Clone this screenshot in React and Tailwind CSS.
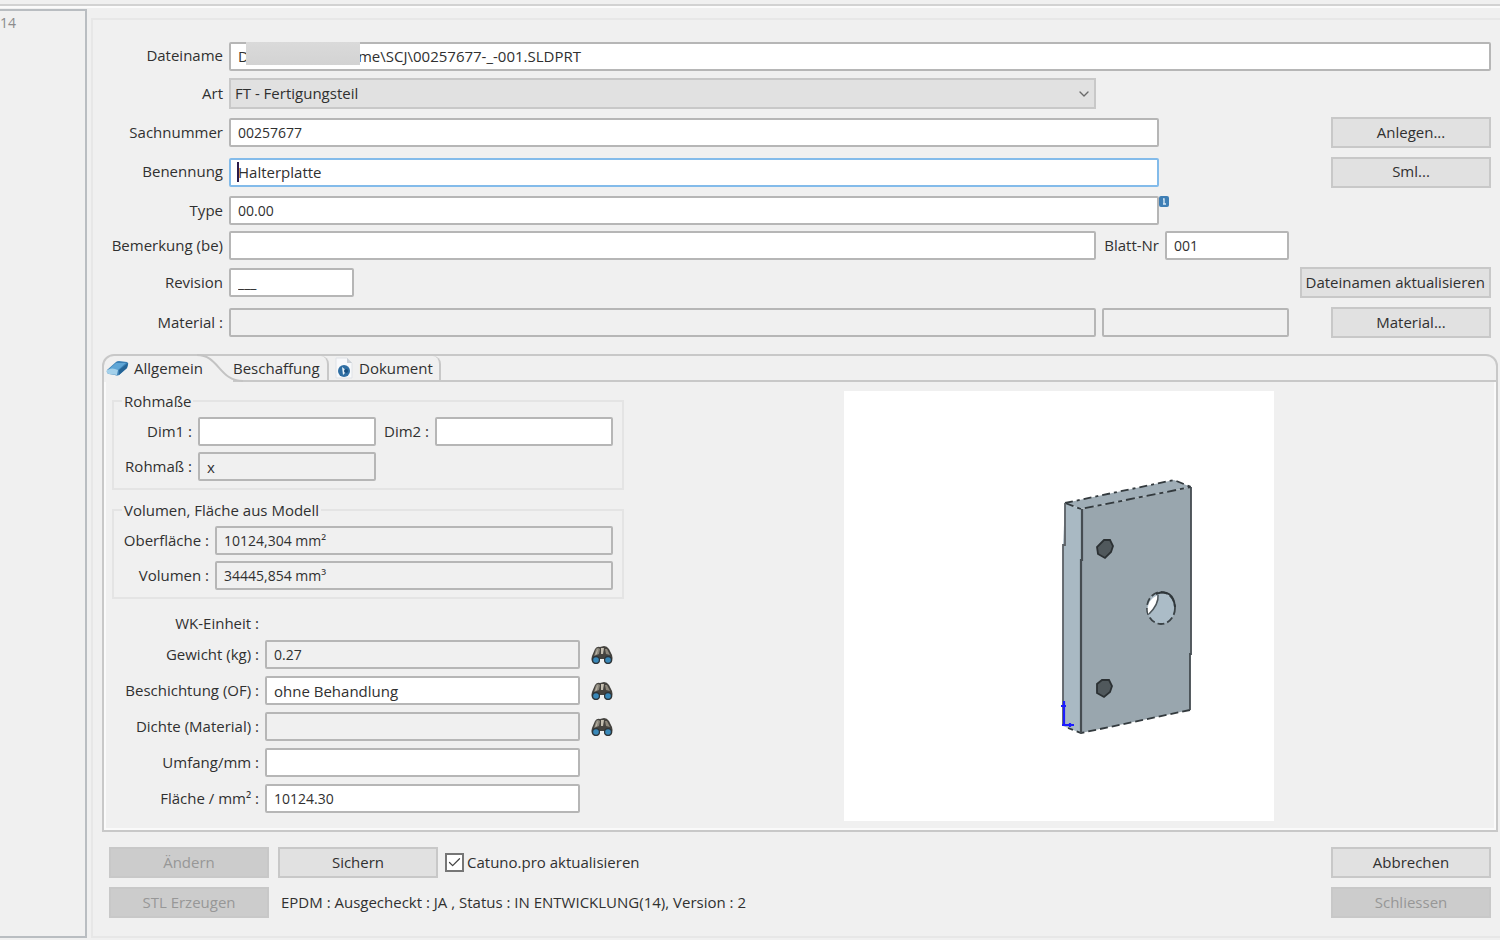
import React, { useState } from "react";
import { Check, ChevronDown } from "lucide-react";
import clsx from "clsx";

// "D" + blanks under the hidden part of the path
const FILE_NAME = "D" + "\u00a0".repeat(28) + "me\\SCJ\\00257677-_-001.SLDPRT";

const Field = ({ id, value = "", readOnly, focused, numeric, className }) => {
  const [text, setText] = useState(value);

  return (
    <input
      id={id}
      type="text"
      value={text}
      readOnly={readOnly}
      onChange={(e) => setText(e.target.value)}
      className={clsx(
        "h-[29px] min-w-0 rounded-xs border-2 px-[7px] outline-none",
        readOnly ? "bg-[#f0f0f0]" : "bg-white",
        focused ? "border-[#83bbea]" : "border-[#b6b6b6]",
        numeric ? "text-[14px]" : "text-[15px]",
        className
      )}
    />
  );
};

const Label = ({ htmlFor, children, className }) => (
  <label htmlFor={htmlFor} className={clsx("pb-0.5 text-right leading-5 whitespace-nowrap", className)}>
    {children}
  </label>
);

const Button = ({ children, disabled, className }) => (
  <button
    type="button"
    disabled={disabled}
    className={clsx(
      "h-[31px] border-2 pb-0.5 whitespace-nowrap leading-5",
      disabled ? "border-[#c8c8c8] bg-[#cccccc] text-[#979797]" : "border-[#c8c8c8] bg-[#e1e1e1]",
      className
    )}
  >
    {children}
  </button>
);

const PartIcon = () => (
  <svg width="24" height="20" viewBox="0 0 24 20" aria-hidden="true">
    <path d="M1 12 L10 4 Q11 3 13 3 L21 4 Q23 5 22 7 L21 10 L13 17 Q11 18 9 17 L3 16 Q0 15 1 12Z" fill="#3b80b5" />
    <path d="M3 11 L10 5 L20 5 L12 12Z" fill="#5fa6d6" />
    <path d="M1 12 Q6 9 12 12 L11 17 L3 16 Q0 15 1 12Z" fill="#a3d0ea" />
    <path d="M13 12 L22 5 L21 10 L13 17Z" fill="#256496" />
  </svg>
);

const DocumentIcon = () => (
  <svg width="18" height="22" viewBox="0 0 18 22" aria-hidden="true">
    <path d="M1 1 H12 L17 6 V21 H1Z" fill="#f8f9fb" stroke="#dfe2e6" />
    <path d="M12 1 L17 6 H12Z" fill="#c9ced4" />
    <circle cx="9" cy="14" r="6" fill="#2f6ea3" />
    <path d="M7 10 L12 14 L8 18Z" fill="#e6f2fa" />
    <circle cx="11" cy="14" r="2" fill="#174f80" />
  </svg>
);

const BinocularsIcon = () => (
  <svg width="24" height="20" viewBox="0 0 24 20" aria-hidden="true">
    <path d="M5 4 Q7 1 10 2 L14 1 Q17 1 19 4 L22 10 Q24 17 19 19 Q14 19 14 14 L10 14 Q10 19 5 19 Q0 17 2 11Z" fill="#45433f" />
    <path d="M6 4 Q8 2 10 4 L9 9 L4 11Z" fill="#8a857a" />
    <path d="M11 3 L14 3 L13 9 L11 9Z" fill="#c4beb0" />
    <path d="M15 4 L17 4 L20 10 L16 9Z" fill="#8d877b" />
    <path d="M7 5 L8 4 L7 9 L5 10Z" fill="#b9b3a5" />
    <circle cx="6" cy="15" r="4" fill="#2c3338" />
    <circle cx="18" cy="15" r="4" fill="#2c3338" />
    <circle cx="6" cy="15" r="2.8" fill="#3988b8" />
    <circle cx="18" cy="15" r="2.8" fill="#3988b8" />
  </svg>
);

// Shaded preview of the plate with its three holes
const PartPreview = () => (
  <svg
    role="img"
    aria-label="Halterplatte"
    viewBox="0 0 430 430"
    className="h-[430px] w-[430px] shrink-0 bg-white"
  >
    <path d="M221 112 L330 89 L347 96 L237 118Z" fill="#9fadb6" />
    <path d="M221 112 L237 118 L237 342 L219 335 L219 155Z" fill="#a9b9c3" />
    <path d="M237 118 L347 96 L346 319 L237 342Z" fill="#99a6ae" />
    <g fill="none" stroke="#333a3e" strokeWidth="1.8">
      <path d="M221 112 L330 89 L347 96" strokeDasharray="8 4 3 4" />
      <path d="M221 112 L237 118 L347 96" strokeDasharray="9 4 4 4" />
      <path d="M346 319 L237 342 L224 337" strokeDasharray="8 4" />
      <path d="M221 112 V154 H219 V335" stroke="#5b6166" />
      <path d="M238 118 V169 H237 V342" strokeWidth="2.2" stroke="#454c51" />
      <path d="M347 96 V263 H346 V319" stroke="#454c51" />
    </g>
    <path d="M260 149 L266 149 L269 155 L267 161 L261 167 L254 163 L253 156Z" fill="#50585c" stroke="#2b3033" strokeWidth="1.8" />
    <path d="M258 289 L265 289 L268 295 L266 301 L260 306 L253 302 L253 293Z" fill="#50585c" stroke="#2b3033" strokeWidth="1.8" />
    <ellipse cx="317" cy="217" rx="14" ry="16" fill="#abbcc7" stroke="#3b4347" strokeWidth="1.8" strokeDasharray="7 3" />
    <path d="M304 222 Q302 209 314 204 Q315 212 305 223Z" fill="#ffffff" />
    <path d="M305 223 Q315 213 314 204" fill="none" stroke="#4c555a" strokeWidth="1.5" />
    <path d="M312 203 Q329 197 331 216" fill="none" stroke="#2f363a" strokeWidth="2" />
    <path d="M220 310 V335 M218 334 H230 M217 315 H222 M226 332 V336" fill="none" stroke="#1d1dff" strokeWidth="2.2" />
  </svg>
);

const DETAILS = [
  { id: "gewicht", label: "Gewicht (kg) :", value: "0.27", readOnly: true, search: true, numeric: true },
  { id: "beschichtung", label: "Beschichtung (OF) :", value: "ohne Behandlung", search: true },
  { id: "dichte", label: "Dichte (Material) :", readOnly: true, search: true },
  { id: "umfang", label: "Umfang/mm :" },
  { id: "flaeche", label: "Fläche / mm² :", value: "10124.30", numeric: true },
];

const HeaderForm = () => (
  <div className="mr-[9px] ml-[11px] grid grid-cols-[119px_minmax(0,1fr)_57px_124px_196px] grid-rows-[28px_31px_31px_32px_29px_25px_33px_31px] items-center gap-x-1.5 gap-y-2">
    <Label htmlFor="dateiname">Dateiname</Label>
    <div className="relative col-span-4 flex">
      <Field id="dateiname" value={FILE_NAME} className="w-full" />
      <span className="absolute top-0 left-[17px] h-[23px] w-[114px] bg-linear-to-b from-[#dadada] to-[#d3d3d3]" />
    </div>

    <Label htmlFor="art">Art</Label>
    <div className="relative flex">
      <select
        id="art"
        className="h-[31px] w-full appearance-none border-2 border-[#c8c8c8] bg-[#e1e1e1] px-1 text-[15px] outline-none"
      >
        <option>FT - Fertigungsteil</option>
      </select>
      <ChevronDown className="pointer-events-none absolute top-2 right-1 h-4 w-4 text-[#6a6a6a]" />
    </div>

    <Label htmlFor="sachnummer" className="col-start-1">Sachnummer</Label>
    <Field id="sachnummer" value="00257677" numeric className="col-span-2" />
    <Button className="col-start-5 w-40 justify-self-end">Anlegen...</Button>

    <Label htmlFor="benennung">Benennung</Label>
    <div className="relative col-span-2 flex">
      <Field id="benennung" value="Halterplatte" focused className="w-full" />
      <span className="absolute top-1 left-2 h-5 w-0.5 bg-[#2a1a4a]" />
    </div>
    <Button className="col-start-5 w-40 justify-self-end">Sml...</Button>

    <Label htmlFor="type">Type</Label>
    <div className="relative col-span-2 flex">
      <Field id="type" value="00.00" numeric className="w-full" />
      <svg width="10" height="11" viewBox="0 0 10 11" className="absolute top-0 left-full" aria-hidden="true">
        <rect width="10" height="11" rx="2" fill="#3f7fb5" />
        <path d="M4 3 H5 V8 M4 8 H7" stroke="#d5e7f5" strokeWidth="1.4" fill="none" />
      </svg>
    </div>

    <Label htmlFor="bemerkung" className="col-start-1">Bemerkung (be)</Label>
    <Field id="bemerkung" />
    <Label htmlFor="blatt">Blatt-Nr</Label>
    <Field id="blatt" value="001" numeric />

    <Label htmlFor="revision" className="col-start-1">Revision</Label>
    <Field id="revision" value="___" numeric className="w-[125px]" />
    <Button className="col-start-5 justify-self-end px-1">Dateinamen aktualisieren</Button>

    <Label htmlFor="material">Material :</Label>
    <Field id="material" readOnly />
    <input
      type="text"
      readOnly
      aria-label="Materialnummer"
      className="col-span-2 h-[29px] min-w-0 rounded-xs border-2 border-[#b6b6b6] bg-[#f0f0f0] px-[7px] outline-none"
    />
    <Button className="w-40 justify-self-end">Material...</Button>
  </div>
);

const TabBar = () => (
  <div role="tablist" className="flex h-[26px] leading-5">
    <button type="button" role="tab" aria-selected="true" className="relative flex w-[129px] items-center gap-1 pb-0.5 pl-0.5">
      <PartIcon />
      Allgemein
      <svg
        width="46"
        height="28"
        viewBox="0 0 46 28"
        className="pointer-events-none absolute -top-0.5 -right-2.5"
        aria-hidden="true"
      >
        <path d="M0 1 C22 1 22 27 46 27" fill="none" stroke="#c3c3c3" strokeWidth="2" />
      </svg>
    </button>
    <button type="button" role="tab" aria-selected="false" className="flex w-24 items-center rounded-tr-lg border-r-2 border-b-2 border-[#c8c8c8]">
      Beschaffung
    </button>
    <button type="button" role="tab" aria-selected="false" className="flex w-[112px] items-center gap-1.5 rounded-tr-lg border-r-2 border-b-2 border-[#c8c8c8] pl-1.5">
      <DocumentIcon />
      Dokument
    </button>
    <div className="flex-1 border-b-2 border-[#c8c8c8]" />
  </div>
);

const GroupBox = ({ title, children }) => (
  <fieldset className="min-w-0 border-2 border-[#e4e4e4] px-2 pt-1.5 pb-[7px]">
    <legend className="px-0.5 leading-5">{title}</legend>
    {children}
  </fieldset>
);

const GeneralTab = () => (
  <div role="tabpanel" className="flex border-x-2 border-b-2 border-[#fafafa] pt-[9px] pb-[7px] pl-1.5">
    <div className="flex w-[512px] shrink-0 flex-col gap-2.5">
      <GroupBox title="Rohmaße">
        <div className="grid grid-cols-[70px_178px_47px_178px] items-center gap-x-1.5 gap-y-1.5">
          <Label htmlFor="dim1">Dim1 :</Label>
          <Field id="dim1" />
          <Label htmlFor="dim2">Dim2 :</Label>
          <Field id="dim2" />
          <Label htmlFor="rohmass">Rohmaß :</Label>
          <Field id="rohmass" value="x" readOnly />
        </div>
      </GroupBox>

      <GroupBox title="Volumen, Fläche aus Modell">
        <div className="grid grid-cols-[87px_398px] items-center gap-x-1.5 gap-y-1.5">
          <Label htmlFor="oberflaeche">Oberfläche :</Label>
          <Field id="oberflaeche" value="10124,304 mm²" readOnly numeric />
          <Label htmlFor="volumen">Volumen :</Label>
          <Field id="volumen" value="34445,854 mm³" readOnly numeric />
        </div>
      </GroupBox>

      <div className="mt-1 grid grid-cols-[147px_315px_24px] items-center gap-x-1.5 gap-y-[7px]">
        <span className="text-right leading-5">WK-Einheit :</span>
        {DETAILS.map(({ id, label, value, readOnly, search, numeric }) => (
          <React.Fragment key={id}>
            <Label htmlFor={id} className="col-start-1">{label}</Label>
            <Field id={id} value={value} readOnly={readOnly} numeric={numeric} />
            {search && (
              <button type="button" aria-label={`${label} suchen`} className="ml-1">
                <BinocularsIcon />
              </button>
            )}
          </React.Fragment>
        ))}
      </div>
    </div>

    <div className="flex flex-1 justify-center">
      <PartPreview />
    </div>
  </div>
);

const Footer = () => (
  <div className="mt-[15px] mr-[9px] mb-4 ml-4 flex justify-between">
    <div className="flex flex-col gap-[9px]">
      <div className="flex items-center">
        <Button disabled className="w-40">Ändern</Button>
        <Button className="ml-[9px] w-40">Sichern</Button>
        <span className="relative ml-[7px] flex">
          <input
            id="catuno"
            type="checkbox"
            defaultChecked
            className="peer h-[19px] w-[19px] appearance-none border-2 border-[#767676] bg-white"
          />
          <Check className="pointer-events-none absolute top-0.5 left-0.5 hidden h-[15px] w-[15px] text-[#444444] peer-checked:block" />
        </span>
        <label htmlFor="catuno" className="ml-[3px] pb-0.5 leading-5">Catuno.pro aktualisieren</label>
      </div>
      <div className="flex items-center">
        <Button disabled className="w-40">STL Erzeugen</Button>
        <span className="ml-3 pb-0.5 leading-5">
          EPDM : Ausgecheckt : JA , Status : IN ENTWICKLUNG(14), Version : 2
        </span>
      </div>
    </div>
    <div className="flex flex-col gap-[9px]">
      <Button className="w-40">Abbrechen</Button>
      <Button disabled className="w-40">Schliessen</Button>
    </div>
  </div>
);

const App = () => {
  return (
    <div className="flex min-h-screen flex-col bg-[#f0f0f0] pt-1 font-['Open_Sans','Noto_Sans',sans-serif] text-[15px] font-medium text-[#303030]">
      <div className="h-1 border-t-2 border-b-2 border-t-[#d2d2d2] border-b-[#fbfbfb]" />
      <div className="mt-px mb-0.5 flex flex-1">
        <aside className="w-[87px] shrink-0 border-t-2 border-r-2 border-b-2 border-[#b9bdc1] pt-0.5 text-[14px] leading-5 text-[#8c8c8c]">
          14
        </aside>
        <main className="mt-[9px] ml-1 min-w-0 flex-1 border-y-2 border-l-2 border-[#e7e7e7] pt-[22px]">
          <HeaderForm />
          <section className="mt-4 mr-0.5 ml-[9px] rounded-t-xl border-2 border-[#c8c8c8]">
            <TabBar />
            <GeneralTab />
          </section>
          <Footer />
        </main>
      </div>
    </div>
  );
};

export default App;
